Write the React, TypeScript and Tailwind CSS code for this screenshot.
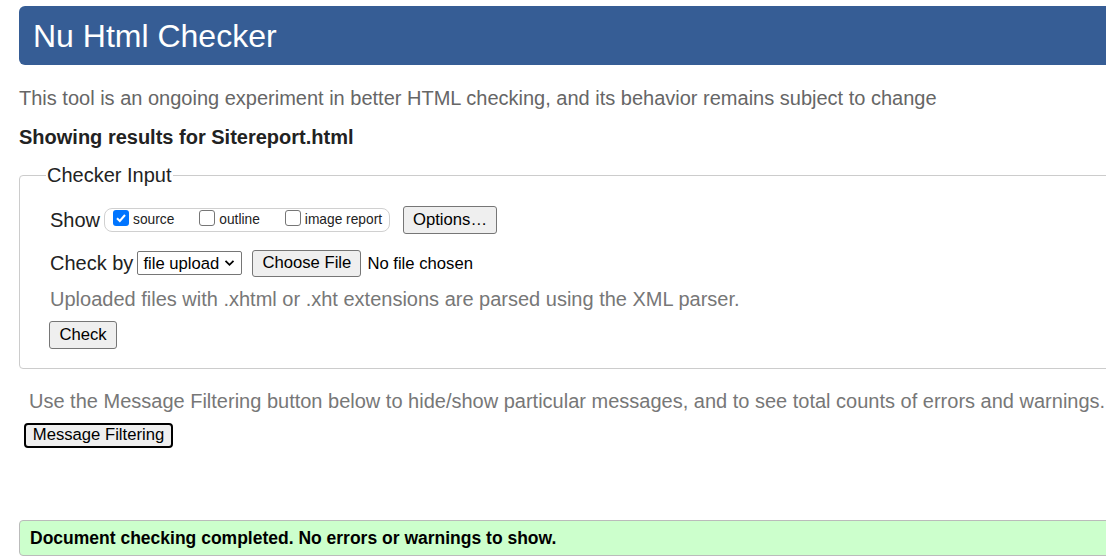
import React from "react";

const font = { fontFamily: '"Liberation Sans", Arial, sans-serif' };

function Btn({ children, className = "" }: { children: React.ReactNode; className?: string }) {
  return (
    <button
      className={`bg-[#efefef] border border-[#767676] rounded-[3px] text-black leading-none ${className}`}
    >
      {children}
    </button>
  );
}

function Check({ checked, label }: { checked?: boolean; label: string }) {
  return (
    <label className="flex items-center gap-[4px] text-[13.75px] text-[#222]">
      {checked ? (
        <span className="w-[16px] h-[16px] rounded-[3px] bg-[#0075ff] flex items-center justify-center -mt-[4px]">
          <svg width="12" height="12" viewBox="0 0 12 12">
            <path d="M2 6.3 L4.8 9 L10 3" fill="none" stroke="white" strokeWidth="2" />
          </svg>
        </span>
      ) : (
        <span className="w-[16px] h-[16px] rounded-[3px] border border-[#767676] bg-white -mt-[4px]" />
      )}
      {label}
    </label>
  );
}

export default function App() {
  return (
    <div className="w-[1106px] h-[560px] overflow-hidden bg-white" style={font}>
      <div className="w-[1300px] ml-[19px] pt-[6px]">
        <div className="h-[59px] bg-[#365d95] rounded-[6px] flex items-center pl-[14px]">
          <h1 className="text-[32px] text-white leading-none">Nu Html Checker</h1>
        </div>

        <p className="mt-[22px] text-[20px] leading-[23px] text-[#666]">
          This tool is an ongoing experiment in better HTML checking, and its behavior remains subject to change
        </p>
        <p className="mt-[16px] text-[20px] leading-[23px] font-bold text-[#222]">
          Showing results for Sitereport.html
        </p>

        <fieldset className="mt-[15px] border border-[#cccccc] rounded-[4px] pl-[30px] pt-[8px] pb-[19px]">
          <legend className="ml-[-4px] px-[1px] text-[20px] leading-[23px] text-[#222]">Checker Input</legend>

          <div className="flex items-center h-[30px] mt-[10px]">
            <span className="text-[20px] text-[#222]">Show</span>
            <div className="ml-[4px] h-[24px] w-[286px] border border-[#d0d0d0] rounded-[8px] flex items-center pl-[8px] gap-[25px]">
              <Check checked label="source" />
              <Check label="outline" />
              <Check label="image report" />
            </div>
            <Btn className="ml-[13px] w-[94px] h-[28px] text-[16.67px]">Options…</Btn>
          </div>

          <div className="flex items-center h-[30px] mt-[13px]">
            <span className="text-[20px] text-[#222]">Check by</span>
            <div className="ml-[4px] h-[24px] w-[105px] border border-[#767676] rounded-[2px] bg-white flex items-center pl-[5px] gap-[5px] text-[16.67px] text-black">
              file upload
              <svg width="11" height="8" viewBox="0 0 11 8">
                <path d="M1.5 1.8 L5.5 5.8 L9.5 1.8" fill="none" stroke="black" strokeWidth="1.8" />
              </svg>
            </div>
            <Btn className="ml-[10px] w-[109px] h-[27px] text-[16.67px]">Choose File</Btn>
            <span className="ml-[6px] text-[16.67px] text-black">No file chosen</span>
          </div>

          <p className="mt-[10px] text-[20px] leading-[23px] text-[#777]">
            Uploaded files with .xhtml or .xht extensions are parsed using the XML parser.
          </p>

          <Btn className="mt-[10px] ml-[-1px] w-[68px] h-[28px] text-[16.67px]">Check</Btn>
        </fieldset>

        <p className="mt-[21px] ml-[10px] text-[20px] leading-[23px] text-[#777]">
          Use the Message Filtering button below to hide/show particular messages, and to see total counts of errors and warnings.
        </p>
        <button className="mt-[10px] ml-[5px] w-[149px] h-[25px] border-2 border-black rounded-[4px] bg-[#efefef] text-[16.67px] leading-none text-black">
          Message Filtering
        </button>

        <div className="mt-[72px] h-[36px] bg-[#ccffcc] border border-[#bbbbbb] rounded-[4px] flex items-center pl-[10px]">
          <span className="text-[17.5px] font-bold text-black">
            Document checking completed. No errors or warnings to show.
          </span>
        </div>
      </div>
    </div>
  );
}
